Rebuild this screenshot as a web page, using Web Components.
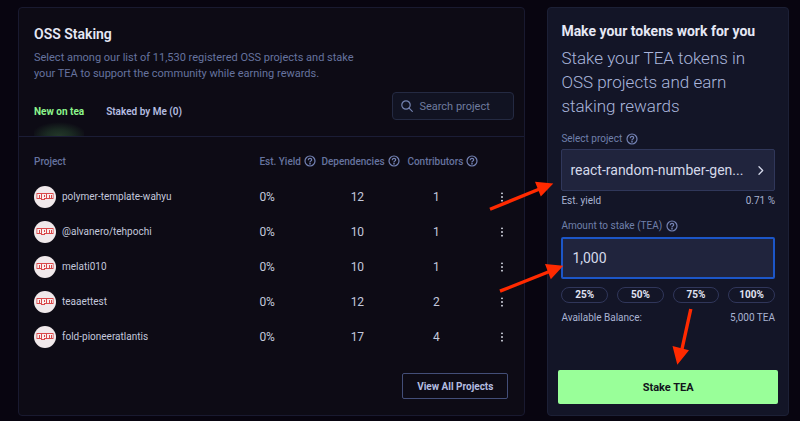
<!DOCTYPE html>
<html lang="en">
<head>
<meta charset="utf-8">
<meta name="viewport" content="width=device-width, initial-scale=1">
<title>OSS Staking</title>
<style>
  html { background: #080510; }
  body {
    margin: 0;
    font-family: Roboto, "Liberation Sans", sans-serif;
    font-size: 10px;
    color: #c3c8dc;
  }
</style>
</head>
<body>
<staking-page></staking-page>

<script>
class BaseElement extends HTMLElement {
  connectedCallback() {
    if (this.shadowRoot) return;
    this.attachShadow({ mode: 'open' }).innerHTML =
      '<style>*{box-sizing:border-box}:host([hidden]){display:none}</style>' + this.render();
  }
}

/* Circled question mark */
class HelpIcon extends BaseElement {
  render() {
    return `
    <style>
      :host { display: inline-flex; flex: none; color: #7483b5; }
      svg { width: 12px; height: 12px; display: block; }
    </style>
    <svg viewBox="0 0 12 12" fill="none" stroke="currentColor" stroke-width="1.2" stroke-linecap="round" stroke-linejoin="round" aria-hidden="true">
      <circle cx="6" cy="6" r="5"/>
      <path d="M4.3 4.7C4.4 3.8 5.1 3.3 6 3.3c1 0 1.7.6 1.7 1.4 0 .6-.3.9-.9 1.3-.5.3-.8.5-.8 1"/>
      <circle cx="6" cy="8.7" r=".3"/>
    </svg>`;
  }
}

class NpmBadge extends BaseElement {
  render() {
    return `
    <style>
      :host { display: flex; flex: none; align-items: center; justify-content: center;
              width: 22px; height: 22px; border-radius: 50%; background: #f0e9eb; }
      svg { width: 18px; height: 7px; display: block; }
    </style>
    <svg viewBox="0 0 18 7" role="img" aria-label="npm package">
      <path fill="#d9484a" d="M.5 0h17v6H9v1H5V6H.5z"/>
      <path fill="#f8eeee" d="M1.3 5H3V2h1v3h1V1H1.3zM6 1v5h2V5h2V1zM11 1v4h2V2h1v3h1V2h1v3h.8V1z"/>
      <path fill="#d9484a" d="M8 2h1v2H8z"/>
    </svg>`;
  }
}

class SearchField extends BaseElement {
  render() {
    return `
    <style>
      :host { display: block; }
      label { display: flex; align-items: center; gap: 6px; height: 28px; padding: 0 8px;
              border: 1px solid #242a42; border-radius: 4px; background: #111322; color: #7483b0; }
      svg { width: 12px; height: 12px; flex: none; }
      input { min-width: 0; flex: 1; border: 0; outline: 0; padding: 0; background: none;
              font: inherit; font-size: 11px; color: #c3c8dc; }
      input::placeholder { color: #6f7b9e; opacity: 1; }
    </style>
    <label>
      <svg viewBox="0 0 12 12" fill="none" stroke="currentColor" stroke-width="1.2" stroke-linecap="round" aria-hidden="true">
        <circle cx="5" cy="5" r="4.2"/><path d="M8.1 8.1l3.2 3.2"/>
      </svg>
      <input type="search" placeholder="Search project" aria-label="Search project">
    </label>`;
  }
}

class TabItem extends BaseElement {
  render() {
    return `
    <style>
      :host { display: flex; }
      button { border: 0; margin: 0; padding: 0 0 17px; background: none; font: inherit; font-weight: 600;
               font-size: 10px; line-height: 14px; color: #b4bde0; white-space: nowrap; }
      :host([active]) button { color: #8cf58c; font-weight: 700;
        background: radial-gradient(ellipse 28px 14px at 50% 100%, #233829 0%, #1a2a22 45%, transparent 100%); }
    </style>
    <button type="button" role="tab" aria-selected="${this.hasAttribute('active')}"><slot></slot></button>`;
  }
}

class ProjectTable extends BaseElement {
  render() {
    const rows = [
      ['polymer-template-wahyu', '0%', 12, 1],
      ['@alvanero/tehpochi', '0%', 10, 1],
      ['melati010', '0%', 10, 1],
      ['teaaettest', '0%', 12, 2],
      ['fold-pioneeratlantis', '0%', 17, 4],
    ].map(([name, yieldRate, deps, people]) => `
      <tr>
        <td><div class="name"><npm-badge></npm-badge><span>${name}</span></div></td>
        <td class="num">${yieldRate}</td>
        <td class="num deps">${deps}</td>
        <td class="num people">${people}</td>
        <td class="menu"><button type="button" aria-label="More actions for ${name}">
          <svg viewBox="0 0 4 10" fill="currentColor" aria-hidden="true"><circle cx="2" cy="1.3" r=".9"/><circle cx="2" cy="5" r=".9"/><circle cx="2" cy="8.7" r=".9"/></svg>
        </button></td>
      </tr>`).join('');
    return `
    <style>
      :host { display: block; }
      table { width: 100%; table-layout: fixed; border-collapse: collapse; }
      th, td { padding: 0; text-align: left; }
      th { height: 42px; padding-top: 6px; font-weight: 500; font-size: 10px; color: #66739f; }
      tbody td { height: 35px; font-size: 10px; }
      .head { display: flex; align-items: center; gap: 3px; white-space: nowrap; }
      .name { display: flex; align-items: center; gap: 6px; }
      tbody .num { font-size: 12px; }
      .deps { text-align: center; padding-right: 14px; }
      .people { text-align: center; padding-right: 29px; }
      .c-yield { width: 62px; } .c-deps { width: 86px; } .c-people { width: 87px; } .c-menu { width: 15px; }
      .menu button { display: flex; width: 15px; justify-content: center; border: 0; padding: 0; background: none; color: #e3e6f2; }
      .menu svg { width: 4px; height: 10px; }
    </style>
    <table>
      <colgroup><col><col class="c-yield"><col class="c-deps"><col class="c-people"><col class="c-menu"></colgroup>
      <thead><tr>
        <th scope="col">Project</th>
        <th scope="col"><span class="head">Est. Yield <help-icon></help-icon></span></th>
        <th scope="col"><span class="head">Dependencies <help-icon></help-icon></span></th>
        <th scope="col"><span class="head">Contributors <help-icon></help-icon></span></th>
        <td></td>
      </tr></thead>
      <tbody>${rows}</tbody>
    </table>`;
  }
}

class ProjectsPanel extends BaseElement {
  render() {
    return `
    <style>
      :host { display: flex; flex-direction: column; border: 1px solid #191a30; border-radius: 4px; background: #0d0b15; }
      header { padding: 16px 10px 0 15px; border-bottom: 1px solid #1b1d36; }
      h1 { margin: 0; font-size: 14px; line-height: 20px; font-weight: 600; color: #e6e8f5; }
      p { margin: 6px 0 0; max-width: 340px; font-size: 11px; line-height: 16px; color: #66739f; }
      .bar { display: flex; justify-content: space-between; align-items: flex-end; margin-top: 10px; }
      .tabs { display: flex; gap: 22px; }
      search-field { width: 122px; margin-bottom: 16px; }
      project-table { padding: 0 15px; }
      footer { display: flex; justify-content: flex-end; margin-top: auto; padding: 0 16px 16px; }
      footer button { height: 26px; padding: 0 14px; border: 1px solid #434e78; border-radius: 2px; background: none;
        font: inherit; font-size: 10px; font-weight: 700; color: #b4bde0; }
    </style>
    <header>
      <h1>OSS Staking</h1>
      <p>Select among our list of 11,530 registered OSS projects and stake your TEA to support the community while earning rewards.</p>
      <div class="bar">
        <div class="tabs" role="tablist">
          <tab-item active>New on tea</tab-item>
          <tab-item>Staked by Me (0)</tab-item>
        </div>
        <search-field></search-field>
      </div>
    </header>
    <project-table></project-table>
    <footer><button type="button">View All Projects</button></footer>`;
  }
}

class AmountChip extends BaseElement {
  render() {
    return `
    <style>
      :host { display: block; }
      button { width: 100%; height: 16px; padding: 0; border: 1px solid #30365a; border-radius: 8px; background: none;
        font: inherit; font-size: 10px; line-height: 14px; font-weight: 700; color: #e0e3f2; }
    </style>
    <button type="button"><slot></slot></button>`;
  }
}

/* A label and its value at the two ends of a line */
class InfoLine extends BaseElement {
  render() {
    return `
    <style>:host { display: flex; justify-content: space-between; font-size: 10px; line-height: 14px; color: #a9b3d2; }</style>
    <slot></slot><slot name="value"></slot>`;
  }
}

/* Red arrows that point at the three steps, drawn over the page */
class StepArrows extends BaseElement {
  render() {
    return `
    <style>
      :host { position: absolute; left: -62px; top: 0; pointer-events: none; }
      svg { display: block; width: 240px; height: 400px; }
    </style>
    <svg viewBox="486 8 240 400" fill="#ff2a00" stroke="#ff2a00" aria-hidden="true">
      <path d="M490 209.2L542 188M500 291.2L552 270.5M690.8 309L682 349" stroke-width="3.4" fill="none"/>
      <path stroke="none" d="M553.3 183.5L535 181.8L540.8 196.5ZM563.3 265.8L545 264L550.8 279.2ZM677.3 364.7L672.5 346L689 350.3Z"/>
    </svg>`;
  }
}

class StakePanel extends BaseElement {
  render() {
    return `
    <style>
      :host { position: relative; display: flex; flex-direction: column; padding: 13px 13px 0;
        border: 1px solid #1c2036; border-radius: 4px; background: #131527; }
      h2 { margin: 0; font-size: 14px; line-height: 20px; font-weight: 700; color: #e6e8f5; }
      .lead { margin: 5px 0 0; font-size: 17px; line-height: 24px; font-weight: 300; color: #aab5dc; }
      .label { display: flex; align-items: center; gap: 4px; font-size: 10px; line-height: 14px; color: #7080ab; }
      .label.first { margin-top: 14px; }
      .label.second { margin-top: 11px; }
      .picker { display: flex; align-items: center; justify-content: space-between; gap: 8px; width: 100%; height: 42px;
        margin: 3px 0; padding: 0 10px 0 8px; border: 1px solid #30375a; border-radius: 2px; background: #20243d;
        font: inherit; font-size: 14px; color: #d5d9ea; text-align: left; }
      .picker svg { width: 6px; height: 9px; flex: none; }
      input { display: block; width: 100%; height: 42px; margin: 4px 0 8px; padding: 0 9px; border: 2px solid #1c56c8;
        border-radius: 2px; outline: 0; background: #20243d; font: inherit; font-size: 14px; color: #d5d9ea; }
      .chips { display: grid; grid-template-columns: repeat(4, 1fr); gap: 9px; margin-bottom: 8px; }
      .submit { height: 34px; margin: auto -3px 11px; border: 0; border-radius: 2px; background: #99ff99;
        font: inherit; font-size: 11px; font-weight: 700; color: #12141c; }
    </style>
    <h2>Make your tokens work for you</h2>
    <p class="lead">Stake your TEA tokens in OSS projects and earn staking rewards</p>
    <div class="label first"><label for="project">Select project</label><help-icon></help-icon></div>
    <button type="button" class="picker" id="project">
      <span>react-random-number-gen...</span>
      <svg viewBox="0 0 6 9" fill="none" stroke="currentColor" stroke-width="1.3" stroke-linecap="round" stroke-linejoin="round" aria-hidden="true"><path d="M1 .8l3.7 3.7L1 8.2"/></svg>
    </button>
    <info-line>Est. yield<span slot="value">0.71 %</span></info-line>
    <div class="label second"><label for="amount">Amount to stake (TEA)</label><help-icon></help-icon></div>
    <input id="amount" type="text" inputmode="decimal" value="1,000">
    <div class="chips">
      <amount-chip>25%</amount-chip><amount-chip>50%</amount-chip><amount-chip>75%</amount-chip><amount-chip>100%</amount-chip>
    </div>
    <info-line>Available Balance:<span slot="value">5,000 TEA</span></info-line>
    <button type="button" class="submit">Stake TEA</button>
    <step-arrows></step-arrows>`;
  }
}

class StakingPage extends BaseElement {
  render() {
    return `
    <style>
      :host { display: grid; grid-template-columns: minmax(0, 21fr) minmax(0, 10fr); gap: 22px;
        min-height: 100vh; padding: 7px 11px 5px 18px; box-sizing: border-box; }
    </style>
    <projects-panel></projects-panel>
    <stake-panel></stake-panel>`;
  }
}

customElements.define('help-icon', HelpIcon);
customElements.define('npm-badge', NpmBadge);
customElements.define('search-field', SearchField);
customElements.define('tab-item', TabItem);
customElements.define('project-table', ProjectTable);
customElements.define('projects-panel', ProjectsPanel);
customElements.define('amount-chip', AmountChip);
customElements.define('info-line', InfoLine);
customElements.define('step-arrows', StepArrows);
customElements.define('stake-panel', StakePanel);
customElements.define('staking-page', StakingPage);
</script>
</body>
</html>
